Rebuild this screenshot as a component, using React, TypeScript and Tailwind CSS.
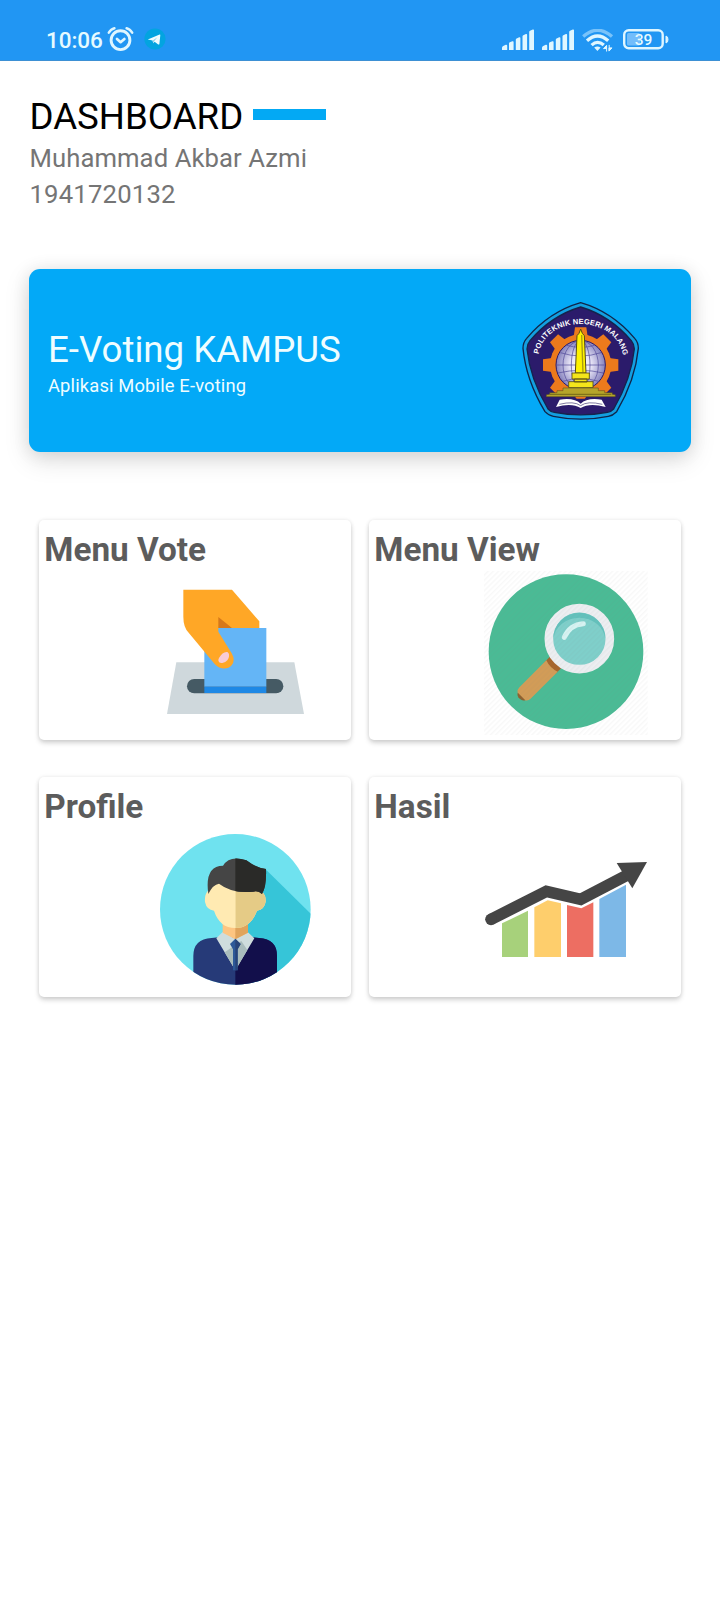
import type { ReactNode } from "react";

function SignalBars() {
  return (
    <svg className="h-[22px] w-[33px]" viewBox="0 0 33 22" fill="#dff6ff">
      <path d="M0 21v-2.2q0-1.2 1.2-1.8l2.6-1.2q1.4-.3 1.4.9V21zM7 21v-6.5q0-.8.8-1.2l2.6-1.1q1.2-.3 1.2.7V21zM13.8 21V10.7q0-.8.8-1.2l2.6-1.2q1.2-.3 1.2.7V21zM20.5 21V7.4q0-.8.8-1.2l2.6-1.2q1.2-.3 1.2.7V21zM27.2 21V3q0-.8.8-1.3l2.8-1.2q1.2-.4 1.2.8V21z" />
    </svg>
  );
}

function StatusBar() {
  return (
    <header className="flex h-[61px] items-start border-b border-[#3d90d4] bg-[#2196f3] pl-[46px] text-[#e6faff]">
      <span className="mt-[27px] w-[61px] text-[22.5px] leading-[26px] font-medium tracking-[-0.1px]">10:06</span>
      <svg className="mt-[26px] h-[26px] w-[27px]" viewBox="0 0 27 26" fill="none" stroke="#dff6ff" strokeLinecap="round">
        <circle cx="13.5" cy="14.2" r="9.4" strokeWidth="2.9" />
        <path d="M1.8 6.6Q4 3 7.4 2.2M25.2 6.6Q23 3 19.6 2.2" strokeWidth="2.5" />
        <path d="M10 13l3.6 3.2 3.8-3.2" strokeWidth="2.7" strokeLinejoin="round" />
      </svg>
      <svg className="mt-[28px] ml-[10px] h-[22px] w-[22px]" viewBox="0 0 22 22">
        <circle cx="11" cy="11" r="10.6" fill="#03a4e0" />
        <path d="M3.8 11.4L15.6 6.6q.9-.2.7.7l-.9 8.6q-.3 1-1.2.5l-3.6-2.6-1.2 1.4-.9-2.6z" fill="#f0fcff" />
        <path d="M8.4 12.8l5-3.6-3.4 4.2-.4 1.8z" fill="#8fd3ec" />
      </svg>
      <div className="mt-[29px] ml-[336px] flex">
        <SignalBars />
        <div className="w-[7px]" />
        <SignalBars />
        <svg className="ml-[7px] h-[24px] w-[32px]" viewBox="0 0 32 24" fill="none" stroke="#dff6ff" strokeWidth="3.3">
          <path d="M1.2 7.6Q15.5-5 30 7.6" stroke="#79c3fa" />
          <path d="M5 11.8Q15.5 2.3 26.2 11.8" />
          <path d="M9.6 16.1Q15.5 10.6 21.8 16.1" />
          <path d="M12.2 18.6q3.2-2.4 6.4 0L15.4 22z" fill="#dff6ff" stroke="none" />
          <path d="M21.5 19.6l3-3.1v3zM30 18.9l-3 3.2v-3.2zM24.6 16.5v6M27.2 15.9v6" fill="#dff6ff" stroke="#dff6ff" strokeWidth="1" />
        </svg>
        <svg className="ml-[8px] h-[22px] w-[48px]" viewBox="0 0 48 22">
          <rect x="2.2" y="1.2" width="38.5" height="18" rx="4.5" fill="none" stroke="#dff6ff" strokeWidth="2.4" />
          <rect x="5" y="4" width="13" height="12.4" rx="1.5" fill="#72bdfb" />
          <path d="M44 7v7q2-.4 2-3.5T44 7z" fill="#dff6ff" stroke="#dff6ff" />
          <text x="21.5" y="16" textAnchor="middle" fill="#e6faff" fontFamily="Roboto" fontWeight="500" fontSize="15.5">39</text>
        </svg>
      </div>
    </header>
  );
}

function CampusLogo() {
  return (
    <svg className="h-[122px] w-[122px]" viewBox="60 45 366 366">
      <defs>
        <path id="motto" d="M116 208C136 86 348 86 370 213" />
        <radialGradient id="globe">
          <stop offset="0" stopColor="#fff" />
          <stop offset=".45" stopColor="#e4e1f4" />
          <stop offset="1" stopColor="#8581bd" />
        </radialGradient>
      </defs>
      <path d="M242 53Q336 80 404 160Q415 172 415 190Q406 285 350 380Q338 392 325 394Q242 411 160 394Q146 392 135 380Q78 285 69 190Q69 172 80 160Q148 80 242 53Z" fill="#139fe0" stroke="#10254a" strokeWidth="4" />
      <path d="M242 66Q330 92 394 167Q403 178 403 192Q394 281 341 372Q334 380 322 382Q242 397 163 382Q151 380 144 372Q90 281 81 192Q81 178 90 167Q154 92 242 66Z" fill="#2b1b6b" stroke="#15234c" strokeWidth="4" />
      <g fill="#ec7a1c">
        <circle cx="242" cy="240" r="92" />
        {[0, 45, 90, 135, 225, 270, 315].map((angle) => (
          <path key={angle} d="M221 155l4-28h34l4 28z" transform={`rotate(${angle} 242 240)`} />
        ))}
      </g>
      <circle cx="242" cy="240" r="74" fill="url(#globe)" stroke="#2b1b6b" strokeWidth="3" />
      <g fill="none" stroke="#4e4797" strokeWidth="2">
        <ellipse cx="242" cy="240" rx="28" ry="73" />
        <ellipse cx="242" cy="240" rx="53" ry="73" />
        <path d="M170 240h144M181 203q61 20 122 0M200 181q42 12 84 0M174 264q68-16 136 0M188 289q54-16 108 0" />
      </g>
      <path d="M231 152l6-7 5-13 5 13 6 7 5 112h-32z" fill="#fff200" stroke="#574c13" strokeWidth="3" />
      <path d="M245 150l4 114" stroke="#a89a12" strokeWidth="4" />
      <path d="M216 264h52v18h-52zM223 282h38v9h-38zM206 290h73v18h-73z" fill="#f4e51b" stroke="#574c13" strokeWidth="2.5" />
      <path d="M189 309h106v8h19v6h23v5l9 1v6H139v-6l10-1v-5h22v-6h18z" fill="#b5a42a" stroke="#4f4720" strokeWidth="1.5" />
      <path d="M150 328h184" stroke="#746817" strokeWidth="3" />
      <path d="M225 335h34l-5 6h-24z" fill="#ec7a1c" />
      <path d="M179 344Q222 337 242 356Q262 337 305 344L317 366Q269 352 242 369Q215 352 168 366Z" fill="#fff" />
      <path d="M178 358Q222 347 242 362Q262 347 307 358" fill="none" stroke="#3e3671" strokeWidth="2" />
      <text fill="#fff" fontFamily="Liberation Sans" fontWeight="700" fontSize="22.5">
        <textPath href="#motto" startOffset="0" textLength="342" lengthAdjust="spacing">POLITEKNIK NEGERI MALANG</textPath>
      </text>
    </svg>
  );
}

function VoteIcon() {
  return (
    <svg className="h-[165px] w-[165px]" viewBox="399 213 495 495">
      <path d="M469 487h354l29 155H441z" fill="#cfd8dc" />
      <rect x="501" y="537" width="289" height="43" rx="21.5" fill="#455a64" />
      <path d="M594 345l50 43h-50z" fill="#d6781a" />
      <path d="M553 384h186v176H553z" fill="#64b5f6" />
      <path d="M553 560h186v19H553z" fill="#1e88e5" />
      <path d="M490 269h146l82 95v20h-82l-41-33v44l40 65q12 21 0 36c-12 14-36 13-51-4l-78-94q-16-16-16-48z" fill="#ffa726" />
      <path d="M597 474q11-20 25-18c8 4 6 18 0 25q-9 10-18 8c-8-1-11-7-7-15z" fill="#f8cbd6" />
    </svg>
  );
}

function ViewIcon() {
  return (
    <svg className="h-[165px] w-[165px]" viewBox="369 213 495 495">
      <defs>
        <pattern id="hatch" width="11" height="11" patternUnits="userSpaceOnUse" patternTransform="rotate(45)">
          <path d="M5 0v11" stroke="#777" strokeOpacity=".08" strokeWidth="3" />
        </pattern>
      </defs>
      <circle cx="618" cy="455" r="232" fill="#4abb95" />
      <g transform="rotate(45 658 416)">
        <path d="M634 514h48v29h-48z" fill="#a7652c" />
        <path d="M634 532q24 9 48 0v115q0 8-6 13l-8 5h-20l-8-5q-6-5-6-13z" fill="#d29c57" />
        <path d="M642 661h32q-4 9-16 9t-16-9z" fill="#8d612f" />
      </g>
      <circle cx="658" cy="416" r="91.5" fill="#7fcfca" stroke="#eceef1" strokeWidth="26" />
      <path d="M580 416a78 78 0 0 1 156 0a78.500 71 0 0 0-156 0" fill="#63c1bc" />
      <path d="M613 412Q629 374 670 371" fill="none" stroke="#d6f3f2" strokeWidth="15" strokeLinecap="round" />
      <path d="M372 213h491v492H372z" fill="url(#hatch)" />
    </svg>
  );
}

function ProfileIcon() {
  return (
    <svg className="h-[165px] w-[165px]" viewBox="399 204 495 495">
      <defs>
        <clipPath id="disc"><circle cx="646" cy="448" r="226" /></clipPath>
        <clipPath id="right-half"><path d="M646 204h248v495H646z" /></clipPath>
      </defs>
      <g clipPath="url(#disc)">
        <path d="M399 204h495v495H399z" fill="#6fe2ef" />
        <path d="M736 327l140 138v234H700l-54-200z" fill="#36c5d8" />
        <path d="M520 700V588q0-51 55-54l27-3h88l27 3q54 3 54 54v112z" fill="#263a78" />
        <path d="M690 531l27 3q54 3 54 54v112H646V531z" fill="#120f4b" />
        <path d="M608 516l38 20 37-20 20 19-57 96-57-96z" fill="#cfdddd" />
        <path d="M646 555l18-12 18 27-36 61-32-54z" fill="#a9bcbc" />
        <path d="M608 480h76v38l-38 20-38-20z" fill="#fdc581" />
        <path d="M646 480h38v38l-38 20z" fill="#e0a45c" />
        <path d="M646 536l16 16-9 16v63h-14v-63l-9-16z" fill="#2d5998" />
        <path d="M646 536l16 16-9 16v63h-7z" fill="#274479" />
        <g>
          <path d="M565 391Q553 404 555 426Q560 450 582 452Q599 504 646 504Q692 504 711 452Q733 449 737 425Q738 405 726 395L690 355H596Z" fill="#ffeab2" />
          <path clipPath="url(#right-half)" d="M646 355V504Q692 504 711 452Q733 449 737 425Q738 405 726 395L690 355Z" fill="#e5cb86" />
        </g>
        <path d="M565 402Q553 318 609 317Q629 284 679 301Q708 323 738 327Q740 380 726 402Q715 391 700 395Q637 402 597 371Q579 373 565 402Z" fill="#454545" />
        <path clipPath="url(#right-half)" d="M565 402Q553 318 609 317Q629 284 679 301Q708 323 738 327Q740 380 726 402Q715 391 700 395Q637 402 597 371Q579 373 565 402Z" fill="#2a2a28" />
      </g>
    </svg>
  );
}

function ResultIcon() {
  return (
    <svg className="h-[165px] w-[165px]" viewBox="369 204 495 495">
      <path d="M426 490l78-38v139h-78z" fill="#a7d17b" />
      <path d="M523 442l40-21 40 9v161h-80z" fill="#fece6c" />
      <path d="M621 435l43 10 36-18v164h-79z" fill="#ed6e62" />
      <path d="M718 417l80-43v217h-80z" fill="#7db8e7" />
      <path d="M393 478L559 394 662 418 800 346" fill="none" stroke="#454545" strokeWidth="35" />
      <circle cx="393" cy="478" r="17.5" fill="#454545" />
      <path d="M770 309l91-3-44 79z" fill="#454545" />
    </svg>
  );
}

function MenuCard({ title, children }: { title: string; children: ReactNode }) {
  return (
    <section className="h-[220px] rounded-[5px] bg-white pt-[10px] pl-[5px] shadow-[0_3px_5px_rgba(0,0,0,0.17),0_0_4px_rgba(0,0,0,0.08)]">
      <h2 className="pl-[0.3px] text-[33.3px] leading-[40px] font-bold text-[#5c5c5c]">{title}</h2>
      <div className="mt-px ml-[109px]">{children}</div>
    </section>
  );
}

export default function App() {
  return (
    <div className="min-h-[1600px] w-[720px] bg-white font-['Roboto',sans-serif]">
      <StatusBar />
      <main>
        <div className="px-[29px] pt-[34px]">
          <div className="flex h-[44px] items-start">
            <h1 className="w-[224px] pl-[0.5px] text-[36.67px] leading-[44px] whitespace-nowrap text-black">DASHBOARD</h1>
            <div className="mt-[14px] h-[11px] w-[73px] bg-[#03a9f4]" />
          </div>
          <p className="mt-[2px] pl-[0.5px] text-[25.67px] leading-[35px] tracking-[0.08px] text-[#757575]">Muhammad Akbar Azmi</p>
          <p className="pl-[0.5px] text-[25.67px] leading-[36px] tracking-[0.2px] text-[#757575]">1941720132</p>
        </div>
        <section className="mx-[29px] mt-[57px] flex h-[183px] items-center justify-between rounded-[11px] bg-[#03a9f7] pr-[49px] pl-[19px] text-[#effdff] shadow-[0_8px_26px_rgba(0,0,0,0.13),0_2px_18px_rgba(0,0,0,0.09)]">
          <div className="pt-[4px]">
            <h2 className="text-[36.67px] leading-[44px]">E-Voting KAMPUS</h2>
            <p className="mt-[3px] text-[18.33px] leading-[22px] tracking-[0.16px]">Aplikasi Mobile E-voting</p>
          </div>
          <CampusLogo />
        </section>
        <div className="mt-[68px] grid grid-cols-2 gap-x-[18px] gap-y-[37px] px-[39px]">
          <MenuCard title="Menu Vote"><VoteIcon /></MenuCard>
          <MenuCard title="Menu View"><ViewIcon /></MenuCard>
          <MenuCard title="Profile"><ProfileIcon /></MenuCard>
          <MenuCard title="Hasil"><ResultIcon /></MenuCard>
        </div>
      </main>
    </div>
  );
}
